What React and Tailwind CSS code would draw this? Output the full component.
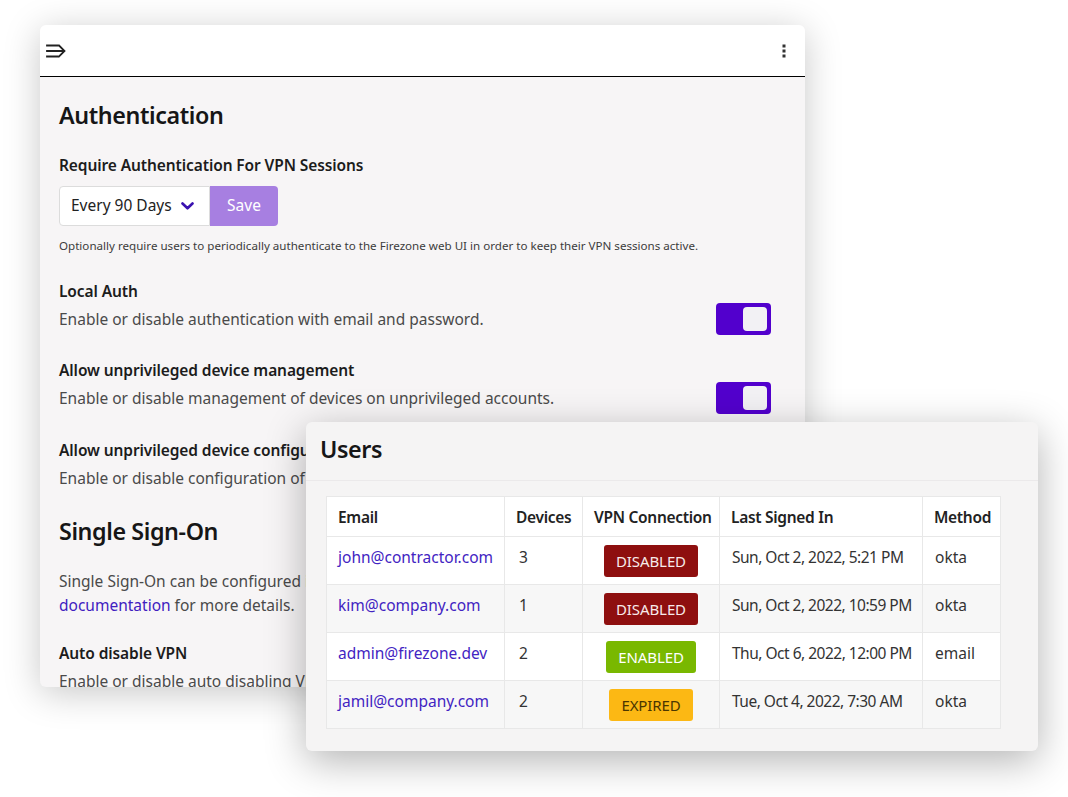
const users = [
  { email: "john@contractor.com", devices: 3, status: "DISABLED", signed: "Sun, Oct 2, 2022, 5:21 PM", method: "okta" },
  { email: "kim@company.com", devices: 1, status: "DISABLED", signed: "Sun, Oct 2, 2022, 10:59 PM", method: "okta" },
  { email: "admin@firezone.dev", devices: 2, status: "ENABLED", signed: "Thu, Oct 6, 2022, 12:00 PM", method: "email" },
  { email: "jamil@company.com", devices: 2, status: "EXPIRED", signed: "Tue, Oct 4, 2022, 7:30 AM", method: "okta" },
]

const badgeStyles = {
  DISABLED: "bg-[#8e0f0f] text-[#f7eaea]",
  ENABLED: "bg-[#79b800] text-white",
  EXPIRED: "bg-[#fcb814] text-[#4a3600]",
}

function Toggle() {
  return (
    <div className="flex h-[32px] w-[55px] shrink-0 items-center justify-end rounded-[4px] bg-[#5200cd] pr-[4px]">
      <div className="h-[24px] w-[24px] rounded-[4px] bg-[#f2f1f4]" />
    </div>
  )
}

function Setting({ title, description, className = "" }) {
  return (
    <div className={className}>
      <p className="text-[15.5px] font-semibold leading-[24px] tracking-[-0.1px] text-[#1c1c1c]">{title}</p>
      <div className="flex items-center justify-between">
        <p className="whitespace-nowrap text-[15.5px] leading-[24px] text-[#4a4a4a]">{description}</p>
        <Toggle />
      </div>
    </div>
  )
}

function SettingsWindow() {
  return (
    <div className="absolute left-[40px] top-[25px] h-[662px] w-[765px] overflow-hidden rounded-[6px] bg-[#f7f5f6] shadow-[0_6px_36px_rgba(0,0,0,0.22)]">
      <header className="flex h-[52px] items-center justify-between border-b border-black bg-white pl-[6px] pr-[19px]">
        <svg width="20" height="14" viewBox="0 0 20 14" fill="none" stroke="#222" strokeWidth="1.8" strokeLinecap="square">
          <path d="M1 1.5H11.5M1 7H18M1 12.5H11.5M13 1.5L18.5 7L13 12.5" />
        </svg>
        <svg width="4" height="14" viewBox="0 0 4 14" fill="#333">
          <rect x="0.5" y="0.5" width="3" height="3" />
          <rect x="0.5" y="5.5" width="3" height="3" />
          <rect x="0.5" y="10.5" width="3" height="3" />
        </svg>
      </header>

      <div className="pl-[19px] pr-[34px]">
        <h1 className="mt-[22px] text-[23.3px] font-semibold leading-[32px] tracking-[-0.4px] text-[#161616]">Authentication</h1>

        <p className="mt-[22px] text-[15.5px] font-semibold leading-[24px] tracking-[-0.1px] text-[#1c1c1c]">
          Require Authentication For VPN Sessions
        </p>
        <div className="mt-[9px] flex h-[40px]">
          <div className="flex w-[151px] items-center justify-between rounded-l-[4px] border border-[#dcdcdc] bg-white pl-[11px] pr-[15px]">
            <span className="text-[15.5px] text-[#222]">Every 90 Days</span>
            <svg width="13" height="8" viewBox="0 0 13 8" fill="none" stroke="#3a12b0" strokeWidth="2.6" strokeLinecap="round" strokeLinejoin="round">
              <path d="M1.5 1.5L6.5 6.3L11.5 1.5" />
            </svg>
          </div>
          <div className="flex w-[68px] items-center justify-center rounded-r-[4px] bg-[#a77fe1] text-[15.5px] text-white">
            Save
          </div>
        </div>
        <p className="mt-[12px] text-[11.6px] leading-[16px] text-[#3c3c3c]">
          Optionally require users to periodically authenticate to the Firezone web UI in order to keep their VPN sessions active.
        </p>

        <Setting className="mt-[25px]" title="Local Auth" description="Enable or disable authentication with email and password." />
        <Setting className="mt-[23px]" title="Allow unprivileged device management" description="Enable or disable management of devices on unprivileged accounts." />
        <Setting className="mt-[24px]" title="Allow unprivileged device configuration" description="Enable or disable configuration of device settings on unprivileged accounts." />

        <h2 className="mt-[21px] text-[23.3px] font-semibold leading-[32px] tracking-[-0.4px] text-[#161616]">Single Sign-On</h2>
        <p className="mt-[22px] whitespace-nowrap text-[15.5px] leading-[24px] text-[#4a4a4a]">
          Single Sign-On can be configured in the Security settings. See the
          <br />
          <span className="text-[#4020c0]">documentation</span> for more details.
        </p>

        <Setting className="mt-[24px]" title="Auto disable VPN" description="Enable or disable auto disabling VPN connections on SSO failure." />
      </div>
    </div>
  )
}

function UsersWindow() {
  return (
    <div className="absolute left-[306px] top-[422px] h-[329px] w-[732px] overflow-hidden rounded-[6px] bg-[#f5f4f4] shadow-[0_10px_40px_rgba(0,0,0,0.3)]">
      <div className="h-[59px] border-b border-[#ebe9ea] pl-[14px] pt-[11px]">
        <h2 className="text-[23.3px] font-semibold leading-[32px] tracking-[-0.4px] text-[#161616]">Users</h2>
      </div>
      <div className="pl-[20px] pt-[15px]">
        <table className="w-[674px] table-fixed border-collapse text-[15.5px] leading-[24px] text-[#333]">
          <colgroup>
            <col className="w-[178px]" />
            <col className="w-[78px]" />
            <col className="w-[137px]" />
            <col className="w-[203px]" />
            <col className="w-[78px]" />
          </colgroup>
          <thead>
            <tr className="bg-white">
              {["Email", "Devices", "VPN Connection", "Last Signed In", "Method"].map((h) => (
                <th key={h} className="h-[40px] whitespace-nowrap border border-[#e8e8e8] px-[11px] text-left align-middle font-semibold tracking-[-0.3px] text-[#222]">
                  {h}
                </th>
              ))}
            </tr>
          </thead>
          <tbody>
            {users.map((u, i) => (
              <tr key={u.email} className={i % 2 === 1 ? "bg-[#f7f7f7]" : "bg-white"}>
                <td className="h-[48px] whitespace-nowrap border border-[#e8e8e8] px-[11px] pt-[8px] align-top text-[#4224c2]">{u.email}</td>
                <td className="border border-[#e8e8e8] px-[14px] pt-[8px] align-top">{u.devices}</td>
                <td className="border border-[#e8e8e8] px-[4px] pt-[8px] text-center align-top">
                  <span className={`inline-flex h-[32px] items-center rounded-[3px] px-[12px] align-top text-[15px] tracking-[-0.1px] ${badgeStyles[u.status]}`}>
                    {u.status}
                  </span>
                </td>
                <td className="whitespace-nowrap border border-[#e8e8e8] px-[12px] pt-[8px] align-top tracking-[-0.5px]">{u.signed}</td>
                <td className="border border-[#e8e8e8] px-[12px] pt-[8px] align-top">{u.method}</td>
              </tr>
            ))}
          </tbody>
        </table>
      </div>
    </div>
  )
}

export default function App() {
  return (
    <div className="relative h-[797px] w-[1068px] overflow-hidden bg-white font-['Noto_Sans','Liberation_Sans',sans-serif]">
      <SettingsWindow />
      <UsersWindow />
    </div>
  )
}
